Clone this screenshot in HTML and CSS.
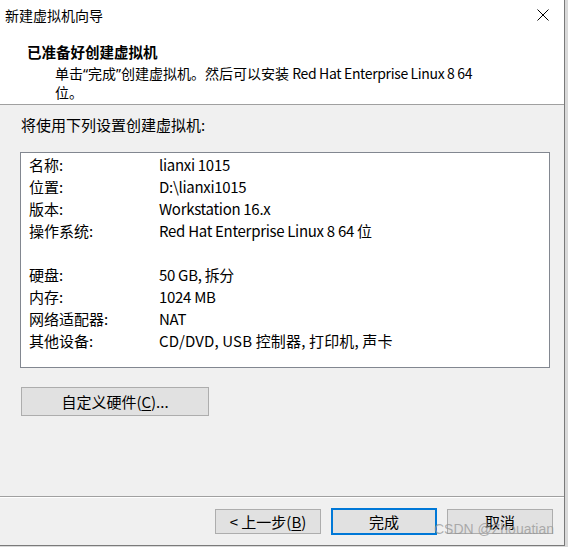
FILE: index.html
```html
<!DOCTYPE html>
<html lang="zh-CN">
<head>
<meta charset="utf-8">
<title>新建虚拟机向导</title>
<link rel="stylesheet" href="styles.css">
</head>
<body>
<div class="window">
  <div class="header">
    <div class="titlebar">
      <span class="title">新建虚拟机向导</span>
      <svg class="close" width="12" height="12" viewBox="0 0 12 12"><path d="M0.5 0.5 L11.5 11.5 M11.5 0.5 L0.5 11.5" stroke="#000" stroke-width="1" fill="none"/></svg>
    </div>
    <div class="heading">已准备好创建虚拟机</div>
    <div class="subtitle">单击<span class="q">“</span>完成<span class="q">”</span>创建虚拟机。然后可以安装 <span class="latin">Red Hat Enterprise Linux 8 64</span><br>位。</div>
  </div>
  <div class="body">
    <div class="intro">将使用下列设置创建虚拟机:</div>
    <div class="summary">
      <div class="row"><span class="label">名称:</span><span class="value">lianxi 1015</span></div>
      <div class="row"><span class="label">位置:</span><span class="value">D:\lianxi1015</span></div>
      <div class="row"><span class="label">版本:</span><span class="value">Workstation 16.x</span></div>
      <div class="row"><span class="label">操作系统:</span><span class="value">Red Hat Enterprise Linux 8 64 位</span></div>
      <div class="row"></div>
      <div class="row"><span class="label">硬盘:</span><span class="value">50 GB, 拆分</span></div>
      <div class="row"><span class="label">内存:</span><span class="value">1024 MB</span></div>
      <div class="row"><span class="label">网络适配器:</span><span class="value">NAT</span></div>
      <div class="row"><span class="label">其他设备:</span><span class="value value-wide">CD/DVD, USB 控制器, 打印机, 声卡</span></div>
    </div>
    <button class="btn custom">自定义硬件(<u>C</u>)...</button>
  </div>
  <div class="footer">
    <button class="btn">&lt; 上一步(<u>B</u>)</button>
    <button class="btn primary">完成</button>
    <button class="btn">取消</button>
    <span class="watermark">CSDN @Zhouatian</span>
  </div>
</div>
</body>
</html>
```
FILE: styles.css
```css
html, body {
  margin: 0;
  padding: 0;
}
body {
  background: #d9d9d9;
  width: 568px;
  height: 547px;
  overflow: hidden;
  font-family: "Noto Sans CJK SC", "Noto Sans", sans-serif;
  color: #000;
}
.window {
  width: 564px;
  height: 545px;
  border-right: 1px solid #7a7a7a;
  border-bottom: 1px solid #7a7a7a;
  background: #f0f0f0;
  display: flex;
  flex-direction: column;
  position: relative;
}
.header {
  background: #fff;
  height: 104px;
  border-bottom: 1px solid #a0a0a0;
  flex: none;
}
.titlebar {
  height: 30px;
  display: flex;
  align-items: center;
  justify-content: space-between;
  padding: 0 15px 0 5px;
}
.title {
  font-size: 14px;
  line-height: 30px;
}
.close {
  display: block;
}
.heading {
  font-size: 14.5px;
  font-weight: bold;
  line-height: 20px;
  padding: 12px 0 0 27px;
}
.subtitle {
  font-size: 14px;
  line-height: 19px;
  padding: 2px 0 0 55px;
}
.q {
  font-family: "Noto Sans", sans-serif;
}
.latin {
  letter-spacing: -0.35px;
}
.body {
  flex: 1;
  padding: 10px 15px 0 20px;
}
.intro {
  font-size: 15px;
  line-height: 20px;
  margin-left: 1px;
}
.summary {
  margin-top: 17px;
  background: #fff;
  border: 1px solid #828790;
  padding: 1px 0 0 8px;
  box-sizing: border-box;
  width: 530px;
  height: 216px;
}
.row {
  display: flex;
  height: 22px;
  line-height: 22px;
  font-size: 15px;
}
.label {
  width: 130px;
  flex: none;
}
.value {
  letter-spacing: -0.3px;
}
.value-wide {
  letter-spacing: 0.15px;
}
.btn {
  font-family: "Noto Sans CJK SC", "Noto Sans", sans-serif;
  font-size: 15px;
  color: #000;
  background: #e1e1e1;
  border: 1px solid #adadad;
  padding: 0;
  margin: 0;
  box-sizing: border-box;
}
.btn u {
  text-underline-offset: 2px;
}
.custom {
  display: block;
  margin-top: 19px;
  margin-left: 1px;
  width: 188px;
  height: 29px;
}
.footer {
  flex: none;
  height: 48px;
  border-top: 1px solid #a0a0a0;
  box-shadow: inset 0 1px 0 #fff;
  display: flex;
  align-items: center;
  gap: 10px;
  padding: 0 0 0 215px;
  position: relative;
}
.footer .btn {
  width: 106px;
  height: 25px;
}
.footer .primary {
  border: 2px solid #0078d7;
  height: 27px;
}
.watermark {
  position: absolute;
  left: 434px;
  top: 24px;
  font-family: "Liberation Sans", sans-serif;
  font-size: 14px;
  line-height: 16px;
  color: rgba(150, 150, 150, 0.75);
  pointer-events: none;
}
```
